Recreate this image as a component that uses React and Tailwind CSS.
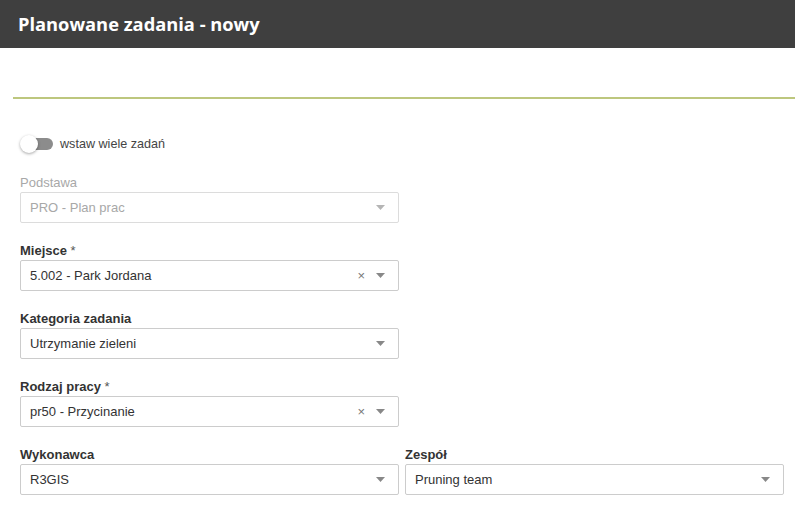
import { useState } from "react";

const Arrow = ({ muted }) => (
  <svg width="9" height="5" viewBox="0 0 9 5" className="shrink-0">
    <path d="M0 0h9L4.5 5z" fill={muted ? "#b5b5b5" : "#888888"} />
  </svg>
);

const SelectBox = ({ value, clearable, disabled }) => (
  <div
    className={`flex h-[31px] items-center rounded-[2px] border bg-white pl-[9px] pr-[13px] text-[13px] ${
      disabled ? "border-[#dcdcdc] text-[#a8a8a8]" : "border-[#cccccc] text-[#333333]"
    }`}
  >
    <span className="flex-1 truncate">{value}</span>
    {clearable && (
      <span className="mr-[11px] text-[13px] leading-none text-[#777777]">×</span>
    )}
    <Arrow muted={disabled} />
  </div>
);

const Field = ({ label, required, disabled, className = "", ...rest }) => (
  <div className={className}>
    <p
      className={`mb-[1px] h-4 text-[13px] leading-4 ${
        disabled ? "text-[#a8a8a8]" : "font-bold text-[#333333]"
      }`}
    >
      {label}
      {required && <span className="font-normal text-[#555555]"> *</span>}
    </p>
    <SelectBox disabled={disabled} {...rest} />
  </div>
);

const App = () => {
  const [multi, setMulti] = useState(false);

  return (
    <div className="min-h-[509px] bg-white font-['Liberation_Sans',Arial,sans-serif]">
      <header className="flex h-12 items-center bg-[#3f3f3f] px-[18px]">
        <h1 className="font-['Open_Sans',sans-serif] text-[18.3px] font-bold text-white">
          Planowane zadania - nowy
        </h1>
      </header>

      <div className="ml-[13px] mt-[49px] h-[2px] bg-[#bdc77e]" />

      <div className="px-[20px] pr-[11px]">
        <button
          type="button"
          onClick={() => setMulti(!multi)}
          className="mt-[35px] flex h-5 items-center gap-[7px]"
        >
          <span className="relative flex h-5 w-[33px] items-center">
            <span className="ml-[8px] h-[12px] w-[25px] rounded-full bg-[#8c8c8c]" />
            <span
              className={`absolute top-[1px] h-[18px] w-[18px] rounded-full bg-white shadow-[0_1px_3px_rgba(0,0,0,0.35)] ${
                multi ? "left-[15px]" : "left-0"
              }`}
            />
          </span>
          <span className="text-[12.6px] text-[#444444]">wstaw wiele zadań</span>
        </button>

        <div className="w-[379px]">
          <Field
            className="mt-[21px]"
            label="Podstawa"
            value="PRO - Plan prac"
            disabled
          />
          <Field
            className="mt-[20px]"
            label="Miejsce"
            required
            value="5.002 - Park Jordana"
            clearable
          />
          <Field
            className="mt-[20px]"
            label="Kategoria zadania"
            value="Utrzymanie zieleni"
          />
          <Field
            className="mt-[20px]"
            label="Rodzaj pracy"
            required
            value="pr50 - Przycinanie"
            clearable
          />
        </div>

        <div className="mt-[20px] grid grid-cols-[379px_379px] gap-[6px]">
          <Field label="Wykonawca" value="R3GIS" />
          <Field label="Zespół" value="Pruning team" />
        </div>
      </div>
    </div>
  );
};

export default App;
